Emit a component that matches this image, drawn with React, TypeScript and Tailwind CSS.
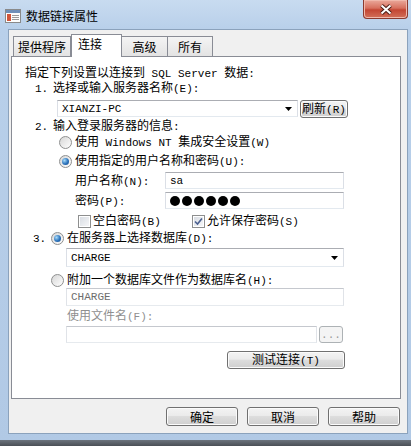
import type { ReactNode } from 'react';

// Latin runs get the narrow mono face, CJK falls through to Noto Sans CJK
function T({ s }: { s: string }) {
    return (
        <>
            {s.split(/([\x20-\x7e]+)/).map((p, i) =>
                /^[\x20-\x7e]+$/.test(p) ? (
                    <span key={i} className="font-['Liberation_Mono',monospace] text-[11px]">{p}</span>
                ) : (
                    p
                )
            )}
        </>
    );
}

function Radio({ checked }: { checked?: boolean }) {
    return (
        <span className="flex h-[13px] w-[13px] shrink-0 items-center justify-center rounded-full border border-[#8e8f8f] bg-[linear-gradient(135deg,#d6d6d6,#ffffff)]">
            <span
                className={
                    checked
                        ? 'h-[7px] w-[7px] rounded-full bg-[radial-gradient(circle_at_35%_35%,#a8dcfa,#2b72bb_55%,#1b4f8c)]'
                        : 'h-[7px] w-[7px] rounded-full bg-[linear-gradient(135deg,#dedede,#f7f7f7)]'
                }
            />
        </span>
    );
}

function Check({ checked }: { checked?: boolean }) {
    return (
        <span className="flex h-[13px] w-[13px] shrink-0 items-center justify-center border border-[#8e8f8f] bg-white">
            <span className="flex h-[9px] w-[9px] items-center justify-center bg-[linear-gradient(135deg,#d9dde3,#f5f6f8)]">
                {checked && (
                    <svg width="9" height="9" viewBox="0 0 9 9">
                        <path d="M1 4.5 L3.5 7 L8 1.5" fill="none" stroke="#4a5f8f" strokeWidth="1.6" />
                    </svg>
                )}
            </span>
        </span>
    );
}

function Arrow() {
    return (
        <svg width="7" height="4" viewBox="0 0 7 4" className="ml-auto mr-[5px]">
            <path d="M0 0 H7 L3.5 4 Z" fill="#000" />
        </svg>
    );
}

function Button({ children, className }: { children: ReactNode; className: string }) {
    return (
        <div
            className={
                'flex items-center justify-center rounded-[3px] border border-[#707070] bg-[linear-gradient(to_bottom,#f3f3f3_0%,#ebebeb_45%,#dddddd_50%,#cfcfcf_100%)] shadow-[inset_0_0_0_1px_#fbfbfb] ' +
                className
            }
        >
            {children}
        </div>
    );
}

export default function App() {
    return (
        <div className="flex h-[446px] w-[411px] flex-col overflow-hidden bg-[linear-gradient(to_bottom,#c8dbf0,#b9d0ea_28px,#b1c9e5)] font-['Noto_Sans_CJK_SC','Noto_Sans',sans-serif] text-[12px] leading-[16px] text-black">
            {/* Title bar */}
            <div className="flex h-[29px] shrink-0 items-start">
                <svg width="16" height="16" viewBox="0 0 16 16" className="ml-[5px] mt-[8px]">
                    <rect x="0.5" y="1.5" width="15" height="13" fill="#fdfdfd" stroke="#8a8a8a" />
                    <rect x="1" y="2" width="14" height="3" fill="#6f8fb8" />
                    <rect x="2" y="6" width="4" height="7" fill="#d2553a" />
                    <path d="M7 7.5 H14 M7 9.5 H14 M7 11.5 H14" stroke="#9a9a9a" />
                </svg>
                <div className="ml-[5px] mt-[8px]">数据链接属性</div>
                <div className="ml-auto mr-[3px] flex h-[19px] w-[45px] items-center justify-center rounded-b-[4px] border border-t-0 border-[#8b3a2f] bg-[linear-gradient(to_bottom,#eaa99b,#d7705e_45%,#c34633_55%,#d2705a)] shadow-[inset_0_0_0_1px_#f0b8ab]">
                    <svg width="14" height="11" viewBox="0 0 14 11">
                        <path d="M2.5 1.5 L11.5 9.5 M11.5 1.5 L2.5 9.5" stroke="#4a1d16" strokeWidth="4" />
                        <path d="M2.5 1.5 L11.5 9.5 M11.5 1.5 L2.5 9.5" stroke="#ffffff" strokeWidth="2" />
                    </svg>
                </div>
            </div>

            {/* Client area */}
            <div className="ml-[8px] mr-[3px] flex h-[405px] shrink-0 flex-col border border-[#8ba2bc] bg-[#f0f0f0]">
                {/* Tabs */}
                <div className="ml-[4px] mt-[4px] flex h-[22px] items-end">
                    <div className="flex h-[20px] w-[58px] items-center justify-center border border-b-0 border-[#898c95] bg-[linear-gradient(to_bottom,#f4f4f4,#e3e3e3)]">提供程序</div>
                    <div className="relative z-10 -mb-px flex h-[23px] w-[51px] items-start border border-b-0 border-[#898c95] bg-white pl-[6px] pt-[1px]">连接</div>
                    <div className="flex h-[20px] w-[46px] items-center justify-center border border-l-0 border-b-0 border-[#898c95] bg-[linear-gradient(to_bottom,#f4f4f4,#e3e3e3)]">高级</div>
                    <div className="flex h-[20px] w-[45px] items-center justify-center border border-l-0 border-b-0 border-[#898c95] bg-[linear-gradient(to_bottom,#f4f4f4,#e3e3e3)]">所有</div>
                </div>

                {/* Panel */}
                <div className="ml-[2px] flex h-[343px] w-[390px] flex-col border border-[#898c95] bg-white">
                    <div className="ml-[13px] mt-[8px] flex h-[15px] items-center">
                        <span><T s="指定下列设置以连接到 SQL Server 数据:" /></span>
                    </div>
                    <div className="ml-[23px] flex h-[16px] items-center">
                        <span className="w-[18px]"><T s="1." /></span>
                        <span><T s="选择或输入服务器名称(E):" /></span>
                    </div>
                    <div className="ml-[45px] mt-[4px] flex h-[18px] items-start">
                        <div className="flex h-[17px] w-[241px] items-center border border-[#abadb3] border-x-[#dbdfe6] border-b-[#e3e9ef] bg-white pl-[4px]">
                            <T s="XIANZI-PC" />
                            <Arrow />
                        </div>
                        <Button className="ml-[2px] h-[18px] w-[48px]">
                            <span><T s="刷新(R)" /></span>
                        </Button>
                    </div>
                    <div className="ml-[23px] flex h-[16px] items-center">
                        <span className="w-[18px]"><T s="2." /></span>
                        <span><T s="输入登录服务器的信息:" /></span>
                    </div>
                    <div className="ml-[47px] flex h-[16px] items-center gap-[3px]">
                        <Radio />
                        <span><T s="使用 Windows NT 集成安全设置(W)" /></span>
                    </div>
                    <div className="ml-[47px] mt-[3px] flex h-[16px] items-center gap-[3px]">
                        <Radio checked />
                        <span><T s="使用指定的用户名称和密码(U):" /></span>
                    </div>
                    <div className="ml-[63px] mt-[3px] flex h-[17px] items-center">
                        <span className="w-[90px]"><T s="用户名称(N):" /></span>
                        <div className="flex h-[17px] w-[179px] items-center border border-[#abadb3] border-x-[#dbdfe6] border-b-[#e3e9ef] bg-white pl-[4px]">
                            <T s="sa" />
                        </div>
                    </div>
                    <div className="ml-[63px] mt-[3px] flex h-[17px] items-center">
                        <span className="w-[90px]"><T s="密码(P):" /></span>
                        <div className="flex h-[17px] w-[179px] items-center gap-[2px] border border-[#abadb3] border-x-[#dbdfe6] border-b-[#e3e9ef] bg-white pl-[4px]">
                            {[0, 1, 2, 3, 4, 5].map((i) => (
                                <span key={i} className="h-[10px] w-[10px] rounded-full bg-black" />
                            ))}
                        </div>
                    </div>
                    <div className="ml-[66px] mt-[4px] flex h-[16px] items-center">
                        <div className="flex w-[114px] items-center gap-[2px]">
                            <Check />
                            <span><T s="空白密码(B)" /></span>
                        </div>
                        <div className="flex items-center gap-[2px]">
                            <Check checked />
                            <span><T s="允许保存密码(S)" /></span>
                        </div>
                    </div>
                    <div className="ml-[21px] mt-[1px] flex h-[16px] items-center">
                        <span className="w-[18px]"><T s="3." /></span>
                        <Radio checked />
                        <span className="ml-[3px]"><T s="在服务器上选择数据库(D):" /></span>
                    </div>
                    <div className="ml-[54px] mt-[2px] flex h-[19px] w-[278px] items-center border border-[#abadb3] border-x-[#dbdfe6] border-b-[#e3e9ef] bg-white pl-[4px]">
                        <T s="CHARGE" />
                        <Arrow />
                    </div>
                    <div className="ml-[39px] mt-[5px] flex h-[16px] items-center gap-[3px]">
                        <Radio />
                        <span><T s="附加一个数据库文件作为数据库名(H):" /></span>
                    </div>
                    <div className="ml-[54px] flex h-[18px] w-[278px] items-center border border-[#c5c8ce] border-x-[#e0e3e8] border-b-[#e6eaee] bg-white pl-[4px] text-[#6d6d6d]">
                        <T s="CHARGE" />
                    </div>
                    <div className="ml-[55px] mt-[2px] flex h-[16px] items-center text-[#8f8f8f]">
                        <span><T s="使用文件名(F):" /></span>
                    </div>
                    <div className="ml-[54px] mt-[2px] flex h-[17px] items-center">
                        <div className="h-[17px] w-[251px] border border-[#c5c8ce] border-x-[#e0e3e8] border-b-[#e6eaee] bg-white" />
                        <div className="ml-[2px] flex h-[17px] w-[24px] items-center justify-center rounded-[3px] border border-[#adb2b5] bg-[#f4f4f4] text-[#9a9a9a]">
                            <T s="..." />
                        </div>
                    </div>
                    <Button className="ml-[215px] mt-[8px] h-[18px] w-[118px] border-[#3c7fb1] shadow-[inset_0_0_0_1px_#c6e6f6]">
                        <span><T s="测试连接(T)" /></span>
                    </Button>
                </div>

                {/* Dialog buttons */}
                <div className="mt-[8px] flex justify-end gap-[9px] pr-[7px]">
                    <Button className="h-[19px] w-[72px]">确定</Button>
                    <Button className="h-[19px] w-[72px]">取消</Button>
                    <Button className="h-[19px] w-[72px]">帮助</Button>
                </div>
            </div>

            <div className="mt-[6px] h-[6px] bg-[linear-gradient(to_bottom,#6b737d,#4a4f56)]" />
        </div>
    );
}
